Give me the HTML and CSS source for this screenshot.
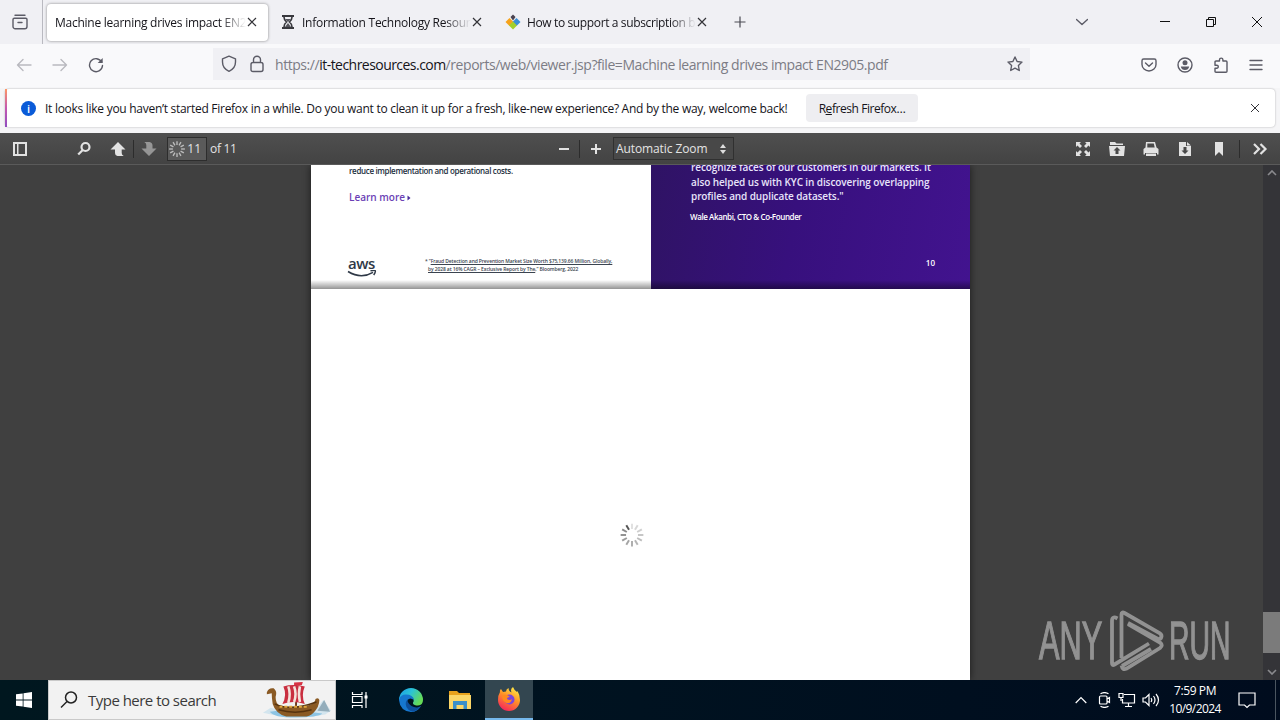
FILE: index.html
```html
<!DOCTYPE html>
<html lang="en">
  <head>
    <meta charset="UTF-8" />
    <meta name="viewport" content="width=device-width, initial-scale=1.0" />
    <title>Machine learning drives impact EN2905.pdf</title>
    <link rel="stylesheet" href="styles.css" />
  </head>
  <body>
    <!-- Tabs -->
    <div class="tab-strip">
      <div class="recent">
        <svg width="18" height="18" viewBox="0 0 18 18" class="line"><path d="M4 2.2h10M2 6.500v7a2.300 2.300 0 0 0 2.300 2.300h9.400a2.300 2.300 0 0 0 2.300-2.300v-7q0-1.300-1.300-1.300H3.300Q2 5.200 2 6.500zM7 9.500h4" /></svg>
      </div>
      <div class="tab active">
        <span class="tab-title">Machine learning drives impact EN2</span>
        <svg class="close" width="10" height="10" viewBox="0 0 10 10"><path d="M1 1l8 8M9 1L1 9" /></svg>
      </div>
      <div class="tab">
        <svg class="favicon" width="16" height="16" viewBox="0 0 16 16">
          <path d="M2 1h12v2H2zM2 13h12v2H2z" fill="#38383d" />
          <path d="M4 3q0 3 2.500 5Q4 10 4 13M12 3q0 3-2.500 5Q12 10 12 13" fill="none" stroke="#38383d" stroke-width="1.600" />
          <path d="M5 5h6L8 8zM8 9l3 4H5z" fill="#55555c" />
        </svg>
        <span class="tab-title">Information Technology Resour</span>
        <svg class="close" width="10" height="10" viewBox="0 0 10 10"><path d="M1 1l8 8M9 1L1 9" /></svg>
      </div>
      <div class="tab">
        <svg class="favicon" width="16" height="16" viewBox="0 0 16 16">
          <path d="M4.500 4L8.500 8l-4 4L.5 8z" fill="#f6a21a" />
          <path d="M11.500 4l4 4-4 4-4-4z" fill="#3c8fd6" />
          <path d="M8 7.500l4 4L8 15.500l-4-4z" fill="#a3cf2a" />
          <path d="M8 .5L10.500 3 8 6.500 5.500 3z" fill="#4a4350" />
        </svg>
        <span class="tab-title narrow">How to support a subscription b</span>
        <svg class="close" width="10" height="10" viewBox="0 0 10 10"><path d="M1 1l8 8M9 1L1 9" /></svg>
      </div>
      <svg class="new-tab" width="12" height="12" viewBox="0 0 12 12"><path d="M6 .5v11M.5 6h11" /></svg>
      <div class="window-buttons">
        <svg width="12" height="12" viewBox="0 0 12 12" class="line chevron"><path d="M.5 3.500L6 8.500l5.500-5" /></svg>
        <svg width="10" height="10" viewBox="0 0 10 10" class="win"><path d="M0 4.500h10" /></svg>
        <svg width="10" height="10" viewBox="0 0 10 10" class="win"><path d="M.5 2.500h7v7h-7zM2.500 2.500v-2h7v7h-2" /></svg>
        <svg width="10" height="10" viewBox="0 0 10 10" class="win"><path d="M0 0l10 10M10 0L0 10" /></svg>
      </div>
    </div>

    <!-- Address bar -->
    <div class="nav-bar">
      <div class="nav-buttons">
        <svg width="16" height="16" viewBox="0 0 16 16" class="line disabled"><path d="M15 8H1.500M7 2.500L1.500 8 7 13.500" /></svg>
        <svg width="16" height="16" viewBox="0 0 16 16" class="line disabled"><path d="M1 8h13.500M9 2.500L14.500 8 9 13.500" /></svg>
        <svg width="16" height="16" viewBox="0 0 16 16" class="line"><path d="M13.700 5A6.500 6.500 0 1 0 14.500 8.500" /><path d="M14.700 1v5h-5z" fill="#5b5b66" stroke="none" /></svg>
      </div>
      <div class="url-bar">
        <svg width="16" height="18" viewBox="0 0 16 18" class="line"><path d="M8 1.200L14.500 3.800V7c0 4-2.500 7.500-6.500 9.300C4 14.500 1.500 11 1.500 7V3.800z" /></svg>
        <svg width="14" height="18" viewBox="0 0 14 18" class="line lock"><path d="M3 7.500h8q2 0 2 2v5q0 2-2 2H3q-2 0-2-2v-5q0-2 2-2zM3.500 7.500V4.700a3.500 3.500 0 0 1 7 0v2.800" /></svg>
        <span class="url">https://<b>it-techresources.com</b>/reports/web/viewer.jsp?file=Machine learning drives impact EN2905.pdf</span>
        <svg width="16" height="16" viewBox="0 0 16 16" class="line"><path d="M8 1l2.100 4.500 4.900.6-3.600 3.400.9 5L8 12.100l-4.300 2.400.9-5L1 6.100l4.900-.6z" /></svg>
      </div>
      <div class="nav-right">
        <svg width="16" height="16" viewBox="0 0 16 16" class="line"><path d="M2.700 2h10.600q1.700 0 1.700 1.700V7.500a7 6.500 0 0 1-14 0V3.700Q1 2 2.700 2zM4.500 6L8 9.300 11.500 6" /></svg>
        <svg width="16" height="16" viewBox="0 0 16 16" class="line"><circle cx="8" cy="8" r="7" /><circle cx="8" cy="5.800" r="2.500" fill="#5b5b66" stroke="none" /><path d="M3.800 9.500h8.400q-.7 3.500-4.200 3.500t-4.200-3.500z" fill="#5b5b66" stroke="none" /></svg>
        <svg width="16" height="16" viewBox="0 0 16 16" class="line"><path d="M2 5q0-1 1-1h3.500V2.800a1.700 1.700 0 0 1 3.400 0V4H13q1 0 1 1v9.200q0 1-1 1H3q-1 0-1-1V11.300h1.800a1.500 1.500 0 0 0 0-3H2z" /></svg>
        <svg width="14" height="12" viewBox="0 0 14 12" class="line"><path d="M1 1.500h12M1 6h12M1 10.500h12" /></svg>
      </div>
    </div>

    <!-- Notification -->
    <div class="notice-area">
      <div class="notice">
        <span class="info">i</span>
        <span class="notice-text">It looks like you haven’t started Firefox in a while. Do you want to clean it up for a fresh, like-new experience? And by the way, welcome back!</span>
        <button type="button">R<u>e</u>fresh Firefox…</button>
        <svg class="close" width="10" height="10" viewBox="0 0 10 10"><path d="M1 1l8 8M9 1L1 9" /></svg>
      </div>
    </div>

    <!-- PDF toolbar -->
    <div class="pdf-toolbar">
      <div class="group left">
        <span class="tool side"><svg width="16" height="16" viewBox="0 0 16 16"><path d="M1 1h14v14H1zM3 3v10h2V3zM6.500 3v10H13V3z" fill-rule="evenodd" /></svg></span>
        <span class="tool"><svg width="16" height="16" viewBox="0 0 16 16"><circle cx="9.500" cy="6" r="4" class="ring" /><path d="M6 8.300l1.500 1.500L3 14.200 1.400 12.700z" /></svg></span>
        <span class="tool up"><svg width="16" height="16" viewBox="0 0 16 16"><path d="M8 1l7.500 7.500h-3.800V12q0 2 2 3H7.500Q5 14.500 5 11.500v-3H.5z" /></svg></span>
        <i class="sep"></i>
        <span class="tool off"><svg width="16" height="16" viewBox="0 0 16 16"><path d="M8 15L.5 7.500h4.800V4q0-2-2-3h5.200q3 .5 3 3.500v3h4z" /></svg></span>
        <div class="page-input">
          <svg class="spinner light" width="18" height="18" viewBox="-12 -12 24 24"></svg>
          <span>11</span>
        </div>
        <span class="of">of 11</span>
      </div>
      <div class="group middle">
        <span class="tool"><svg width="12" height="12" viewBox="0 0 12 12"><path d="M1 5h10v2H1z" /></svg></span>
        <i class="sep"></i>
        <span class="tool"><svg width="12" height="12" viewBox="0 0 12 12"><path d="M5 1h2v4h4v2H7v4H5V7H1V5h4z" /></svg></span>
        <div class="zoom">
          <span>Automatic Zoom</span>
          <svg width="6" height="10" viewBox="0 0 6 10"><path d="M3 0l3 4H0zM3 10l3-4H0z" /></svg>
        </div>
      </div>
      <div class="group right">
        <span class="tool"><svg width="16" height="16" viewBox="0 0 16 16"><path d="M1 1h5L4.500 2.500 7 5 5 7 2.500 4.500 1 6zM15 1v5l-1.500-1.500L11 7 9 5l2.500-2.500L10 1zM1 15v-5l1.500 1.500L5 9l2 2-2.500 2.500L6 15zM15 15h-5l1.500-1.500L9 11l2-2 2.500 2.500L15 10z" /></svg></span>
        <span class="tool"><svg width="16" height="16" viewBox="0 0 16 16"><path d="M1 1h5l1.500 1.500H14V4H1zM0 5h16l-1 10H1zM8 6L4.500 9.500h2V13h3V9.500h2z" fill-rule="evenodd" /></svg></span>
        <span class="tool"><svg width="16" height="16" viewBox="0 0 16 16"><path d="M3 1h9l1.500 5.500 2 1.500v5.500H14V12H2v1.500H.5V8l2-1.500zM4.300 2.500v4h7.400l-.9-4zM3 12.500h10V15H3z" fill-rule="evenodd" /></svg></span>
        <span class="tool"><svg width="16" height="16" viewBox="0 0 16 16"><path d="M2 1h7v4h5v10H2zM10 1l4 3.500h-4zM6.500 6v3.500h-2L8 13l3.500-3.500h-2V6z" fill-rule="evenodd" /></svg></span>
        <span class="tool"><svg width="16" height="16" viewBox="0 0 16 16"><path d="M4 1h8v14l-4-4-4 4z" /></svg></span>
        <i class="sep"></i>
        <span class="tool"><svg width="16" height="14" viewBox="0 0 16 14"><path d="M2 2l5 5-5 5M8.500 2l5 5-5 5" class="ring" /></svg></span>
      </div>
    </div>

    <!-- Document -->
    <div class="viewer">
      <div class="pages">
        <div class="page ten">
          <div class="page-left">
            <p class="body-text">reduce implementation and operational costs.</p>
            <p class="learn">Learn more <svg width="4" height="6" viewBox="0 0 4 6"><path d="M.5.5L3.500 3 .5 5.500z" /></svg></p>
            <div class="page-footer">
              <div class="aws">
                <span>aws</span>
                <svg width="30" height="8" viewBox="0 0 30 8"><path d="M1 1.500q13 8 25 .8" /><path d="M23.500.8q4.500-.8 4.800 0 .3 1.500-1.600 4.200" /></svg>
              </div>
              <p class="source">* “<u>Fraud Detection and Prevention Market Size Worth $75,139.66 Million, Globally,</u><br /><u class="second">by 2028 at 16% CAGR – Exclusive Report by The</u>,” Bloomberg, 2022</p>
            </div>
          </div>
          <div class="page-right">
            <p class="quote">recognize faces of our customers in our markets. It<br />also helped us with KYC in discovering overlapping<br />profiles and duplicate datasets."</p>
            <p class="author">Wale Akanbi, CTO &amp; Co-Founder</p>
            <p class="number">10</p>
          </div>
        </div>
        <div class="page eleven">
          <svg class="spinner dark" width="26" height="26" viewBox="-12 -12 24 24"></svg>
        </div>
      </div>
      <div class="scrollbar">
        <svg width="10" height="6" viewBox="0 0 10 6"><path d="M1 5l4-4 4 4" /></svg>
        <div class="thumb"></div>
        <svg width="10" height="6" viewBox="0 0 10 6"><path d="M1 1l4 4 4-4" /></svg>
      </div>
      <div class="watermark">
        <span class="any">ANY</span>
        <svg width="56" height="64" viewBox="0 0 56 64"><path d="M8.500 9.500Q3 6.500 3 12v42q0 3 2.500 1.500L40 34.500M12.500 49V5.500q0-3 3-1.500l35 20q3 2 1.500 5-1.500 2-4 .5L19 14M12.500 56.500q1 5 5 3L51 39q3.500-2.800 0-5.500L19 15" /><path d="M13 57l29-17" /></svg>
        <span class="run">RUN</span>
      </div>
    </div>

    <!-- Taskbar -->
    <div class="taskbar">
      <div class="start"><svg width="16" height="16" viewBox="0 0 16 16"><path d="M0 2.300l6.700-.9v6.200H0zM7.500 1.300L16 0v7.600H7.500zM0 8.400h6.700v6.200L0 13.700zM7.500 8.400H16V16l-8.500-1.300z" fill="#fff" /></svg></div>
      <div class="search">
        <svg width="18" height="18" viewBox="0 0 18 18"><circle cx="11" cy="6.500" r="5.500" /><path d="M7 10.500l-6 6" /></svg>
        <span>Type here to search</span>
        <svg class="ship" width="70" height="38" viewBox="0 0 72 38">
          <path d="M1 32l8-5 8 2h38l8-10 8 11-6 4q-30 6-64-2z" fill="#d3e5ee" />
          <path d="M57 30l7-11 6 12z" fill="#93adbb" />
          <path d="M8 31q20-3 54 2-4 4-28 4-22 0-26-6z" fill="#8cc4e4" />
          <path d="M35 2v28" stroke="#6b3c1e" stroke-width="2" />
          <path d="M33 1l9-.5-1 3-8 1z" fill="#d83243" />
          <path d="M22 5q10-3 22 0-4 9 0 18-12-4-23 0 5-9 1-18z" fill="#c92f40" />
          <path d="M27 5q3 8 0 17M33 5q3 8 0 16M39 5q-2 8 0 16" stroke="#f4e3dc" stroke-width="2.600" fill="none" />
          <path d="M5 11q2-5 7-4 4 3 2 9 0 8 5 9 18 3 31-1 5-3 5-6 3-2 4 1 0 7-6 13-4 4-10 4H25Q14 33 11 23q-1-6-1-11l-5 1z" fill="#8a5a24" />
          <path d="M13 23q16 8 43-2M17 29q17 5 34 0" stroke="#56330f" stroke-width="1.500" fill="none" />
          <path d="M18 26h28" stroke="#e2a83d" stroke-width="2" stroke-dasharray="3 2" />
        </svg>
      </div>
      <div class="app"><svg width="18" height="18" viewBox="0 0 18 18" class="white"><path d="M1.500 1v2.500h9.500V1M1.500 5.500H11v6H1.500zM1.500 17v-2.500H11V17M15 1v16" /><path d="M13.500 4.500h3v3h-3z" fill="#fff" stroke="none" /></svg></div>
      <div class="app edge">
        <svg width="24" height="24" viewBox="0 0 24 24">
          <defs><linearGradient id="edge" x1="0" y1="0" x2="1" y2=".5"><stop offset="0" stop-color="#1a9be8" /><stop offset=".5" stop-color="#2bc3d6" /><stop offset="1" stop-color="#65db58" /></linearGradient></defs>
          <path d="M0 12a12 12 0 0 1 24 0q0 5-5 5.500-4 0-5-2-.3-1 .7-2.300Q15 9 10 8L0 12z" fill="url(#edge)" />
          <path d="M0 12q1-5.500 7-5.500 7 0 8 5.500-4-3-6.500 0-2 4 2.500 7.500 5 3 11-1.500-3.500 6-10 6Q1 23 0 12z" fill="#1677cf" />
          <path d="M8.500 11q-4 6 1 10.800 3 2.500 6 1.500 4-1.300 6.500-5-5 2.500-9.500-.3-4.500-3-4-7z" fill="#0d4f9c" />
        </svg>
      </div>
      <div class="app">
        <svg width="22" height="20" viewBox="0 0 22 20">
          <path d="M0 1h8l2 2h11v5H0z" fill="#e8a21c" />
          <path d="M0 5h22v14H0z" fill="#fbd667" />
          <path d="M4 11h14v8h-3.500v-4h-7v4H4z" fill="#3a8fc9" />
        </svg>
      </div>
      <div class="app current">
        <svg width="24" height="24" viewBox="0 0 24 24">
          <defs><linearGradient id="fox" x1=".8" y1="0" x2=".3" y2="1"><stop offset="0" stop-color="#fff04a" /><stop offset=".45" stop-color="#ff9526" /><stop offset="1" stop-color="#f5245d" /></linearGradient></defs>
          <path d="M3 5q-.5-2 1-3l2 3 3-.5Q9 2 11.500 1q0 3 3 4.500Q13 2 16 0q1 3 4 5l.5-1q2.500 4 2.500 9a11 11 0 0 1-22 0q0-5 2-8z" fill="url(#fox)" />
          <circle cx="12.500" cy="12.500" r="5" fill="#7a45dc" />
          <path d="M5 9q4-3 8 1-3 0-3 2 3 2 5 0-1 5-5.500 4Q5 14 5 9z" fill="#ff8a1e" />
        </svg>
      </div>
      <div class="tray">
        <svg width="12" height="8" viewBox="0 0 12 8" class="white"><path d="M.7 7L6 1.500 11.300 7" /></svg>
        <svg width="14" height="16" viewBox="0 0 14 16" class="white"><path d="M2.500 1.800q4-2.500 8 0M2.500 14.200q4 2.500 8 0M2.500 4h5.500q1 0 1 1v6q0 1-1 1H2.500q-1 0-1-1V5q0-1 1-1zM9 7l2.500-1.500v5L9 9" /></svg>
        <svg width="18" height="16" viewBox="0 0 18 16" class="white"><path d="M6 2.500h10.500v8.500H4.500V7M10.500 11v3.500M7 14.500h7M1 1.500h4v4H1zM3 5.500V9" /></svg>
        <svg width="18" height="14" viewBox="0 0 18 14" class="white"><path d="M1 5h2.500L7 1.500v11L3.500 9H1zM9 5q1.500 2 0 4M11.500 3q3 4 0 8M14 1q5 6 0 12" /></svg>
        <div class="clock">7:59 PM<br /><span>10/9/2024</span></div>
        <svg width="18" height="17" viewBox="0 0 18 17" class="white"><path d="M1 1h16v12h-5.500L9 15.500 6.500 13H1z" /></svg>
        <i class="desktop-edge"></i>
      </div>
    </div>
    <script>
      // twelve spokes for each loading spinner, darkest at eleven o'clock
      document.querySelectorAll(".spinner").forEach((svg) => {
        const light = svg.classList.contains("light");
        for (let i = 0; i < 12; i++) {
          const line = document.createElementNS("http://www.w3.org/2000/svg", "line");
          line.setAttribute("y1", -5.5);
          line.setAttribute("y2", -10.5);
          line.setAttribute("transform", "rotate(" + i * 30 + ")");
          line.setAttribute("opacity", light ? 0.75 : i === 11 ? 1 : 0.18 + i * 0.05);
          svg.appendChild(line);
        }
      });
    </script>
  </body>
</html>
```
FILE: styles.css
```css
* {
  box-sizing: border-box;
}

body {
  margin: 0;
  width: 1280px;
  height: 720px;
  overflow: hidden;
  display: flex;
  flex-direction: column;
  font-family: "Open Sans", "Noto Sans", sans-serif;
  font-size: 12px;
  color: #15141a;
}

p {
  margin: 0;
}

svg {
  flex: none;
  display: block;
}

.line {
  fill: none;
  stroke: #5b5b66;
  stroke-width: 1.4;
  stroke-linejoin: round;
  stroke-linecap: round;
}

.disabled {
  opacity: 0.4;
}

.close path {
  stroke: #333338;
  stroke-width: 1.2;
}

/* tabs */
.tab-strip {
  height: 44px;
  flex: none;
  display: flex;
  align-items: center;
  background: #f0f0f4;
}

.recent {
  width: 43px;
  height: 44px;
  padding-left: 11px;
  display: flex;
  align-items: center;
  border-right: 1px solid #b9b9c0;
}

.tab {
  width: 223px;
  height: 37px;
  margin-right: 2px;
  padding: 0 12px 0 9px;
  display: flex;
  align-items: center;
}

.tab.active {
  width: 221px;
  margin-left: 4px;
  margin-right: 3px;
  padding: 0 11px 0 8px;
  background: #fff;
  border-radius: 4px;
  box-shadow: 0 0 3px rgba(0, 0, 0, 0.45);
}

.favicon {
  margin-right: 6px;
}

.tab-title {
  flex: 1;
  white-space: nowrap;
  margin-right: 1px;
  letter-spacing: -0.26px;
  -webkit-mask-image: linear-gradient(to left, transparent, #000 26px);
  mask-image: linear-gradient(to left, transparent, #000 26px);
}

.tab-title.narrow {
  letter-spacing: -0.37px;
}

.new-tab {
  margin-left: 13px;
}

.new-tab path {
  stroke: #4a4a52;
  stroke-width: 1.2;
}

.window-buttons {
  margin-left: auto;
  display: flex;
  align-items: center;
  gap: 36px;
  padding-right: 18px;
}

.chevron {
  margin-right: 36px;
}

.win {
  fill: none;
  stroke: #111;
  stroke-width: 1;
}

/* address bar */
.nav-bar {
  height: 44px;
  flex: none;
  display: flex;
  align-items: center;
  background: #f9f9fb;
}

.nav-buttons {
  width: 213px;
  padding-left: 16px;
  margin-top: -2px;
  display: flex;
  gap: 20px;
}

.url-bar {
  width: 817px;
  height: 32px;
  margin-top: -4px;
  padding: 0 7px 0 8px;
  display: flex;
  align-items: center;
  background: #f0f0f4;
}

.lock {
  margin-left: 13px;
}

.url {
  flex: 1;
  margin-left: 11px;
  font-size: 14px;
  letter-spacing: -0.44px;
  white-space: nowrap;
  color: #7c7c85;
}

.url b {
  font-weight: normal;
  letter-spacing: -0.54px;
  color: #15141a;
}

.nav-right {
  margin: -3px 0 0 auto;
  padding-right: 17px;
  display: flex;
  align-items: center;
  gap: 20px;
}

/* notification */
.notice-area {
  height: 45px;
  flex: none;
  padding: 1px 5px 5px 5px;
  background: #f5f5f7;
}

.notice {
  height: 38px;
  padding: 0 15px 0 13px;
  display: flex;
  align-items: center;
  background: #fff;
  border-radius: 4px;
  border-left: 2px solid;
  border-image: linear-gradient(#ff9a62, #c458b0, #8d4bc0) 1;
  box-shadow: 0 0 2px rgba(0, 0, 0, 0.3);
}

.info {
  width: 15px;
  height: 15px;
  margin-left: 1px;
  border-radius: 50%;
  background: #0a5bd8;
  color: #fff;
  font-size: 11px;
  font-weight: 600;
  line-height: 15px;
  text-align: center;
}

.notice-text {
  width: 753px;
  margin-left: 9px;
  white-space: nowrap;
  letter-spacing: -0.28px;
}

.notice button {
  width: 112px;
  height: 28px;
  margin-left: 8px;
  padding: 0;
  border: 0;
  border-radius: 4px;
  background: #eeeef1;
  font: inherit;
  letter-spacing: -0.44px;
  color: inherit;
}

.notice .close {
  margin-left: auto;
}

.notice .close path {
  stroke-width: 1;
}

/* pdf toolbar */
.pdf-toolbar {
  height: 32px;
  flex: none;
  display: flex;
  justify-content: space-between;
  background: linear-gradient(#4f4f4f, #434343);
  border-bottom: 1px solid #5a5a5a;
  color: #e4e4e4;
}

.group {
  display: flex;
  align-items: center;
}

.left {
  width: 548px;
  padding-left: 4px;
}

.middle {
  width: 186px;
}

.right {
  flex: 1;
  justify-content: flex-end;
  padding-right: 3px;
}

.tool {
  width: 32px;
  display: flex;
  justify-content: center;
}

.right .tool {
  width: 34px;
}

.middle .tool {
  width: 31px;
}

.tool path {
  fill: #e2e2e2;
}

.tool .ring {
  fill: none;
  stroke: #e2e2e2;
  stroke-width: 2.2;
}

.side {
  margin-right: 32px;
}

.up {
  margin-left: 2px;
  margin-right: -1px;
}

.off {
  margin-left: -1px;
  opacity: 0.5;
}

.sep {
  width: 1px;
  height: 18px;
  background: #2c2c2c;
}

.right .sep {
  margin: 0 3px;
}

.page-input {
  width: 40px;
  height: 24px;
  margin-left: 2px;
  padding: 0 5px 0 0;
  display: flex;
  align-items: center;
  justify-content: space-between;
  background: #5a5a5a;
  border: 1px solid #2d2d2d;
}

.of {
  margin-left: 3px;
  letter-spacing: -0.3px;
}

.zoom {
  width: 121px;
  height: 23px;
  margin-left: 2px;
  padding: 0 7px 0 2px;
  display: flex;
  align-items: center;
  justify-content: space-between;
  border: 1px solid #303030;
  background: #484848;
}

.zoom span {
  letter-spacing: -0.1px;
}

.zoom path {
  fill: #ddd;
}

.spinner line {
  stroke: #555;
  stroke-width: 1.8;
}

.spinner.light line {
  stroke: #ddd;
}

/* document */
.viewer {
  height: 515px;
  flex: none;
  position: relative;
  display: flex;
  background: #404040;
}

.pages {
  width: 659px;
  margin-left: 311px;
  box-shadow: 0 0 8px rgba(0, 0, 0, 0.6);
  clip-path: inset(0 -10px);
}

.ten {
  height: 124px;
  display: flex;
  position: relative;
  background: #fff;
}

.ten::after {
  content: "";
  position: absolute;
  left: 0;
  right: 0;
  bottom: 0;
  height: 9px;
  background: linear-gradient(transparent, rgba(0, 0, 0, 0.42));
}

.page-left {
  width: 340px;
  padding-left: 38px;
}

.body-text {
  font-size: 8px;
  line-height: 12px;
  font-weight: 600;
  letter-spacing: -0.34px;
  color: #232f3e;
}

.learn {
  margin-top: 13px;
  display: flex;
  align-items: center;
  gap: 2px;
  font-size: 10px;
  line-height: 15px;
  font-weight: 600;
  letter-spacing: 0;
  color: #6b3fb5;
}

.learn path {
  fill: #4b2d9a;
}

.page-footer {
  margin-top: 52px;
  display: flex;
}

.aws {
  width: 77px;
  margin-left: -2px;
}

.aws span {
  display: block;
  margin-left: 1px;
  font-size: 15px;
  line-height: 13px;
  font-weight: 600;
  letter-spacing: -0.5px;
  color: #2f3947;
}

.aws path {
  fill: none;
  stroke: #2f3947;
  stroke-width: 1.5;
}

.source {
  margin-left: 1px;
  font-size: 5px;
  line-height: 8px;
  font-weight: 600;
  letter-spacing: -0.12px;
  white-space: nowrap;
  color: #3b4450;
}

.second {
  margin-left: 3px;
}

.page-right {
  width: 319px;
  padding-left: 39px;
  background: linear-gradient(100deg, #2f1364, #37107d 45%, #42138f);
  color: #e8e4fa;
}

.quote {
  margin-top: -5px;
  padding-left: 1px;
  font-size: 10px;
  line-height: 14.5px;
  font-weight: 600;
  letter-spacing: -0.1px;
  white-space: nowrap;
}

.author {
  margin-top: 7px;
  font-size: 8px;
  line-height: 12px;
  font-weight: 600;
  letter-spacing: -0.4px;
  color: #fff;
}

.number {
  margin: 34px 35px 0 0;
  font-size: 8px;
  line-height: 12px;
  font-weight: 600;
  text-align: right;
  color: #fff;
}

.eleven {
  height: 391px;
  display: flex;
  justify-content: center;
  padding: 233px 18px 0 0;
  background: #fff;
}

.scrollbar {
  width: 17px;
  margin-left: auto;
  padding: 5px 0 5px;
  display: flex;
  flex-direction: column;
  align-items: center;
  background: #343438;
}

.scrollbar path {
  fill: none;
  stroke: #8a8a8e;
  stroke-width: 1.6;
}

.thumb {
  width: 17px;
  height: 41px;
  margin: auto 0 16px;
  background: #7b7b7b;
}

/* watermark floats over the page */
.watermark {
  position: absolute;
  left: 1039px;
  top: 444px;
  display: flex;
  align-items: center;
  color: #929292;
}

.watermark span {
  width: 62px;
  font-family: "Liberation Sans", Arial, sans-serif;
  font-size: 53px;
  line-height: 64px;
  -webkit-text-stroke: 1.4px #929292;
  transform: scaleX(0.58);
  transform-origin: left;
}

.watermark .run {
  transform: scaleX(0.535);
}

.watermark svg {
  margin: 0 4px 0 8px;
}

.watermark path {
  fill: none;
  stroke: #929292;
  stroke-width: 3.8;
}

/* taskbar */
.taskbar {
  height: 40px;
  flex: none;
  display: flex;
  background: linear-gradient(90deg, #00171f, #001220 50%, #000c1e);
}

.start {
  width: 48px;
  display: flex;
  align-items: center;
  justify-content: center;
}

.search {
  width: 288px;
  padding: 0 3px 0 11px;
  display: flex;
  align-items: center;
  background: #f2f2f2;
  border: 1px solid #c9c9c9;
}

.search circle,
.search > svg:first-child path {
  fill: none;
  stroke: #222;
  stroke-width: 1.5;
}

.search span {
  margin-left: 10px;
  font-size: 15px;
  letter-spacing: -0.52px;
  color: #3a3a3a;
  white-space: nowrap;
}

.ship {
  margin-left: auto;
}

.app {
  width: 48px;
  margin-right: 2px;
  display: flex;
  align-items: center;
  justify-content: center;
}

.edge {
  padding-left: 2px;
}

.current {
  margin: 0 0 0 -1px;
  background: #334650;
  border-bottom: 2px solid #76b9ed;
}

.white {
  fill: none;
  stroke: #fff;
  stroke-width: 1.2;
}

.tray {
  margin-left: auto;
  display: flex;
  align-items: center;
  color: #fff;
}

.tray svg {
  margin-right: 6px;
}

.tray svg:first-child {
  margin-right: 11px;
}

.clock {
  width: 58px;
  line-height: 18px;
  letter-spacing: -0.4px;
  text-align: center;
  white-space: nowrap;
  margin-right: 14px;
}

.clock span {
  letter-spacing: -0.6px;
}

.tray .clock + svg {
  margin-right: 19px;
}

.desktop-edge {
  width: 1px;
  height: 40px;
  margin-right: 4px;
  background: #4a5560;
}
```
